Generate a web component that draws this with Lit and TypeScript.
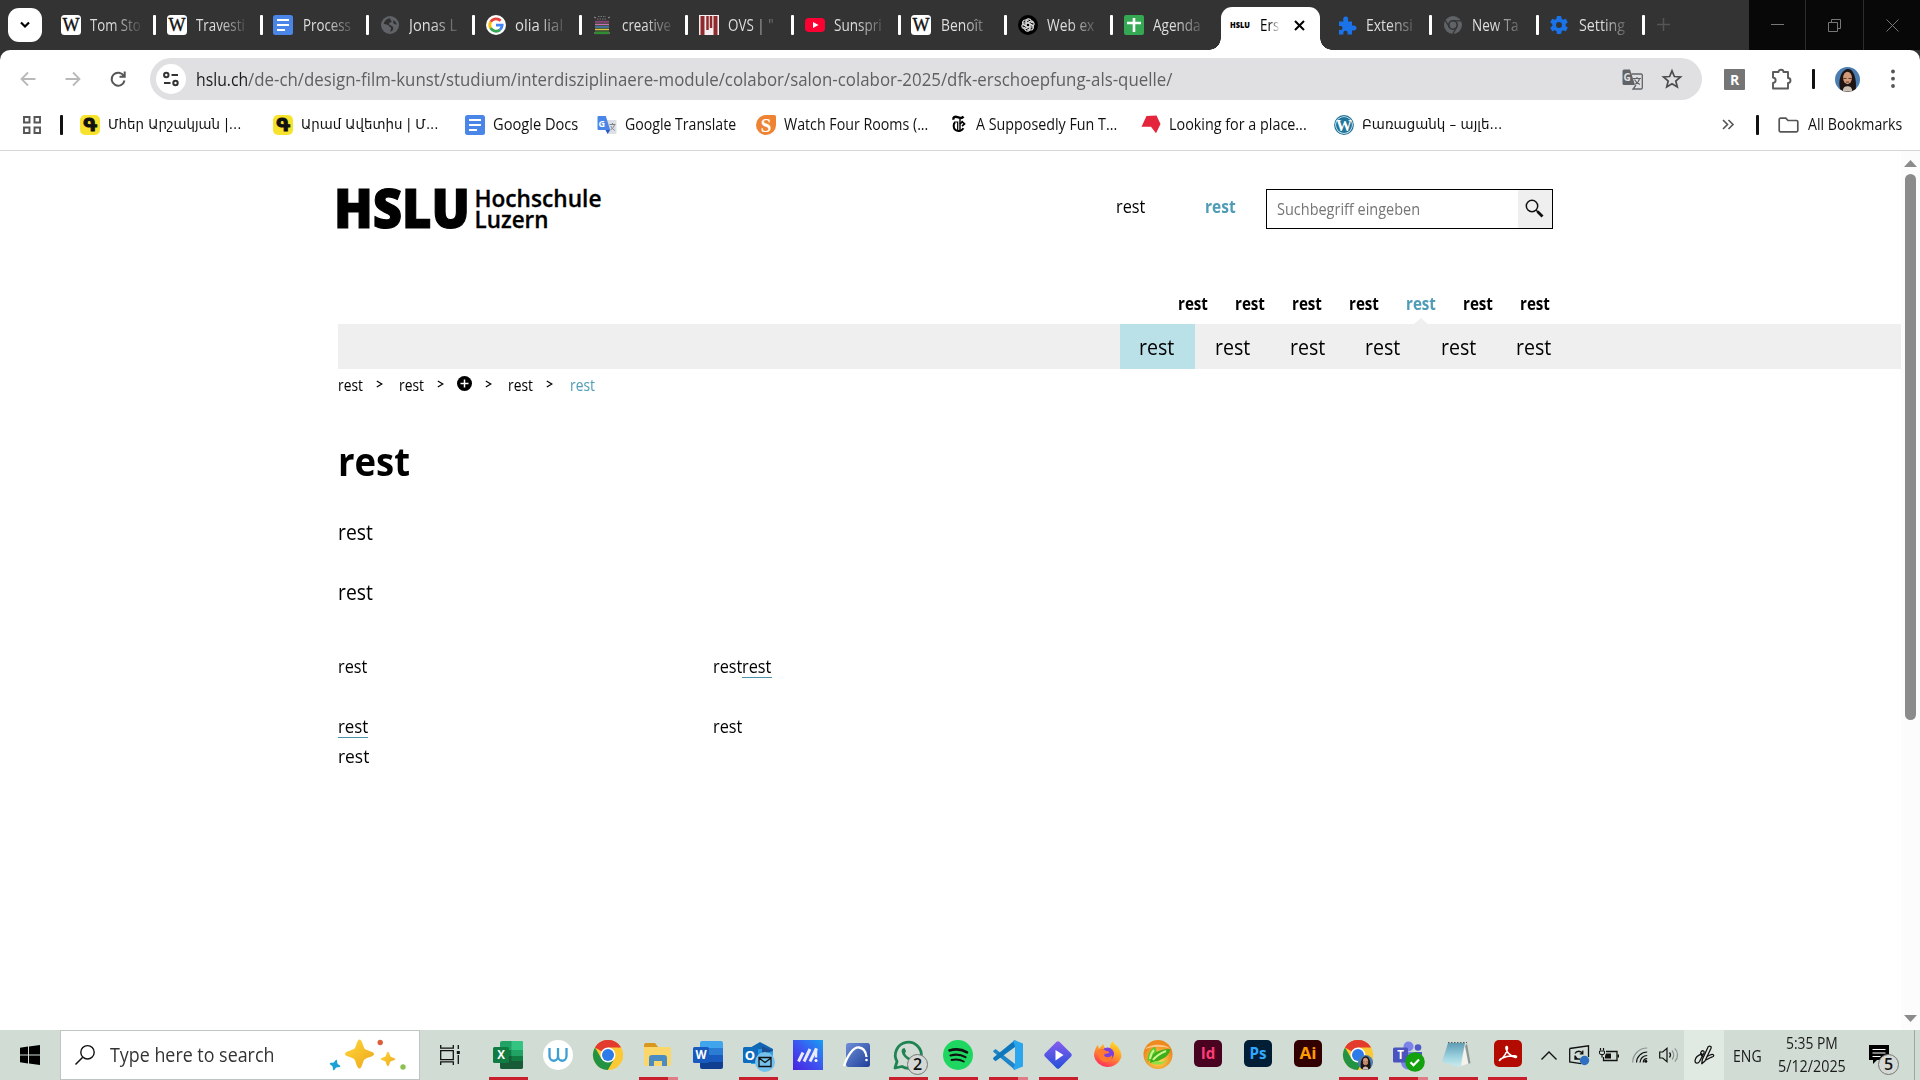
import { LitElement, html, svg, css, nothing } from "lit";
import { customElement, property } from "lit/decorators.js";
import { classMap } from "lit/directives/class-map.js";

/* ---------- text condensed or widened to a given width ---------- */
@customElement("fit-text")
class FitText extends LitElement {
  @property() text = "";
  @property({ type: Number }) w = 0;
  static styles = css`
    :host { display: inline-block; white-space: pre; vertical-align: baseline; }
    .run { display: inline-block; transform-origin: 0 50%; }
  `;
  updated() {
    const run = this.renderRoot.querySelector(".run") as HTMLElement;
    const natural = run.offsetWidth;
    if (this.w && natural) {
      run.style.transform = `scaleX(${this.w / natural})`;
      run.style.marginRight = this.w - natural + "px";
    }
  }
  render() {
    return html`<span class="run">${this.text}</span>`;
  }
}

const fit = (text: string, w: number) => html`<fit-text .text=${text} .w=${w}></fit-text>`;

/* ---------- icons ---------- */
const icon = (w: number, h: number, body: unknown, box = `0 0 ${w} ${h}`) =>
  html`<svg width=${w} height=${h} viewBox=${box} fill="none">${body}</svg>`;

const wiki = svg`<rect width="20" height="20" rx="3.500" fill="#fff"/><text x="10" y="16" text-anchor="middle" font-family="Liberation Serif, serif" font-size="18" textLength="17" lengthAdjust="spacingAndGlyphs" fill="#111" stroke="#111" stroke-width=".4">W</text>`;
const docs = svg`<rect width="20" height="20" rx="2.500" fill="#4a86e8"/><path d="M4 5h12M4 10h12M4 15h8" stroke="#fff" stroke-width="2"/>`;
const globe = svg`<circle cx="10" cy="10" r="9" fill="#5f6368"/><path d="M10 3.200c-3 .4-5.600 2.600-6.300 5.500l4.300 1.200c1.500.4 1 2.100 2.300 2.400 1.500.4.600 2-.3 4.300 2.600-.3 3.400-2.200 3.200-3.700-.3-2.400-2.700-1.900-3.900-3.300-1-1.300.4-2.100 1.800-2.300.9-.2.600-1.700-.3-2z" fill="#2f2f2f"/><path d="M13 5.200c1.800.7 3.300 2.200 3.800 4.200-1.600.4-3-.2-3.600-1.600z" fill="#2f2f2f"/>`;
const google = svg`<circle cx="10" cy="10" r="10" fill="#fff"/><g stroke-width="2.800"><path d="M4.700 6.900A6.200 6.200 0 0 1 14.600 5.800" stroke="#ea4335"/><path d="M4.700 6.800A6.200 6.200 0 0 0 4.700 13.200" stroke="#fbbc05"/><path d="M4.600 13A6.200 6.200 0 0 0 14 14.800" stroke="#34a853"/><path d="M13.900 14.900A6.200 6.200 0 0 0 16.200 10.100H10" stroke="#4285f4"/></g>`;
const creative = svg`<path d="M2 2l2 1M18 2l-2 1M2 18h2M18 18h-2" stroke="#999"/><path d="M6 1.500h8M5 4h10" stroke="#777" stroke-dasharray="1.500 1"/><path d="M3 5.500h14v14H3z" fill="#3f4a3a"/><path d="M3 6.800h14" stroke="#8a3f7a" stroke-width="1.800"/><path d="M3 9.500h14" stroke="#c76fb0" stroke-width="1.300"/><path d="M3 12h14" stroke="#3a88c8" stroke-width="1.300"/><path d="M3 14.500h14" stroke="#e0c23a" stroke-width="1.300"/><path d="M3 17.800h14" stroke="#2f8d32" stroke-width="2.400"/>`;
const ovs = svg`<rect width="20" height="20" fill="#f6eeee"/><path d="M3.500 1v19M16.500 1v19" stroke="#8f2a2f" stroke-width="4"/><path d="M8.500 1v14M12 1v12" stroke="#8f2a2f" stroke-width="2.500"/>`;
const youtube = svg`<rect y="3" width="20" height="14" rx="4" fill="#ff0033"/><path d="M8 7l5.500 3L8 13z" fill="#fff"/>`;
const gpt = svg`<circle cx="10" cy="10" r="10" fill="#000"/><g stroke="#ddd" stroke-width="1.100">${[0, 60, 120, 180, 240, 300].map(
  (a) => svg`<path transform="rotate(${a} 10 10)" d="M8 11.200V6.500c0-3.200 4.600-3.700 5.300-.5M8 8.800l4-2.300 2.800 1.600"/>`
)}</g>`;
const sheet = svg`<rect width="20" height="20" rx="2" fill="#34a853"/><path d="M10 3v14M3 8h14" stroke="#fff" stroke-width="2.600"/>`;
const hslu = svg`<text x="0" y="13" font-family="Open Sans, sans-serif" font-weight="800" font-size="9" textLength="20" lengthAdjust="spacingAndGlyphs" fill="#000">HSLU</text>`;
const puzzleBlue = svg`<path d="M2 6h4.500c-1-3.800.8-5 2.200-5s3.200 1.200 2.200 5H15v4.200c3.200-.8 4.500.8 4.500 2.300S18.200 15.600 15 14.800V19h-4.600c.6-3-.4-3.700-1.900-3.700S6 16 6.600 19H2v-4.700c3 .5 3.500-.7 3.500-1.900S4.800 10 2 10.600z" transform="translate(0 .5)" fill="#1a73e8"/>`;
const chromeGrey = svg`<circle cx="10" cy="10" r="9" fill="#5f6368"/><circle cx="10" cy="10" r="4.200" stroke="#333" stroke-width="1.600"/><path d="M10 5.800h8.300M6.400 12.200L2.300 5.500M13.600 12.200L9.700 19" stroke="#333" stroke-width="1.300"/>`;
const gear = svg`<g fill="#1a73e8"><circle cx="10" cy="10" r="6.800"/>${[0, 60, 120].map(
  (a) => svg`<rect x="7.600" y="1" width="4.800" height="18" rx="1" transform="rotate(${a} 10 10)"/>`
)}</g><circle cx="10" cy="10" r="3" fill="#333"/>`;
const armenian = svg`<rect width="20" height="20" rx="5" fill="#f7e22d"/><text x="10" y="16" text-anchor="middle" font-family="DejaVu Sans, sans-serif" font-weight="700" font-size="18" fill="#111" stroke="#111" stroke-width="1.200">Գ</text>`;
const gTranslate = svg`<path d="M8 5h10.500a1 1 0 0 1 1 1v12a1 1 0 0 1-1 1H11z" fill="#dcdfe3"/><path d="M1.500 1h7.300l4.400 14H1.500a1 1 0 0 1-1-1V2a1 1 0 0 1 1-1z" fill="#4a86e8"/><path d="M8.500 15h4.700l-2.600 4z" fill="#2a56c6"/><text x="1.500" y="11.500" font-family="Open Sans, sans-serif" font-weight="700" font-size="9" fill="#fff">G</text><path d="M12.500 9.500h6M15.500 8v1.500M17.500 9.500c-.6 2.500-2 4.300-4 5.300M13.800 11c.7 1.700 2 3.300 4 4.300" stroke="#7c858e" stroke-width="1"/>`;
const sTape = svg`<path d="M10 0h8.500A1.500 1.500 0 0 1 20 1.500V10A10 10 0 1 1 10 0z" fill="#ee8433"/><text x="10" y="16.500" text-anchor="middle" font-family="Liberation Serif, serif" font-weight="700" font-size="19" fill="#fff">S</text>`;
const times = svg`<g stroke="#000"><path d="M1.500 4.800C.8 2.200 3 1.200 5.500 2.200s4.500 1.500 6-.7" stroke-width="2.400"/><path d="M3 7.200c-1.800 1.600-1.800 5.800.2 7.600s6 1.800 8.300-1.600" stroke-width="2"/><path d="M2.500 7h3.200v8" stroke-width="1.200"/><path d="M8 4v12.500" stroke-width="1.400"/><path d="M8 9l2.200-2.300L12.500 9 10 11.200" stroke-width="1.700"/></g>`;
const redTag = svg`<path d="M5.500 1l10-.4L19.500 9 15 18.300l-5-6.600H.5z" fill="#e3263c"/>`;
const wordpress = svg`<circle cx="10" cy="10" r="9.300" fill="#fff" stroke="#21759b" stroke-width="1.200"/><circle cx="10" cy="10" r="8" fill="#21759b"/><text x="10" y="16" text-anchor="middle" font-family="Liberation Serif, serif" font-weight="700" font-size="17" textLength="16" lengthAdjust="spacingAndGlyphs" fill="#fff">W</text>`;

const chromeBall = svg`<circle cx="15" cy="15" r="15" fill="#fcc934"/><path d="M15 15L2 7.500A15 15 0 0 1 28 7.500z" fill="#e33b2e"/><path d="M2 7.500A15 15 0 0 0 15 30l6.500-11.300L8.500 18.700z" fill="#229342"/><path d="M2 7.500A15 15 0 0 1 28 7.500H15z" fill="#e33b2e"/><path d="M15 30A15 15 0 0 0 28 7.500H15l6.500 11.300z" fill="#fcc934"/><circle cx="15" cy="15" r="7.500" fill="#fff"/><circle cx="15" cy="15" r="6" fill="#2c7be9"/>`;
const face = (x: number, y: number, r: number) => svg`<g transform="translate(${x} ${y}) scale(${r / 12})"><circle r="12" fill="#4a7db0"/><path d="M-7 9C-9 3-7-9 0-10S9 3 8 9A12 12 0 0 1-7.500 9z" fill="#1d1413"/><ellipse cy="-1.500" rx="4.200" ry="6" fill="#d29a78"/><path d="M-4 -1h3M1-1h3M-1.500 2.500h3" stroke="#5a2f22" stroke-width=".9"/><path d="M-4.500 11.500c0-4 2-5 4.500-5s4.500 1 4.500 5z" fill="#cdbfb0"/></g>`;
const adobe = (t: string, bg: string, fg: string) => svg`<rect x="1" y="0" width="28" height="27" rx="5" fill="${bg}"/><text x="15" y="19" text-anchor="middle" font-family="Open Sans, sans-serif" font-weight="700" font-size="16.500" textLength="${t === "Id" ? 14.5 : 17}" lengthAdjust="spacingAndGlyphs" fill="${fg}">${t}</text>`;
const letterTile = (t: string, c: string) => svg`<rect x="0" y="7" width="16" height="16" rx="1.500" fill="${c}"/><text x="8" y="19" text-anchor="middle" font-family="Open Sans, sans-serif" font-weight="700" font-size="11.500" fill="#fff">${t}</text>`;

interface App { art: unknown; run?: "one" | "many"; badge?: string; }
const apps: App[] = [
  { run: "one", art: svg`<rect x="7" y="1" width="23" height="28" rx="2" fill="#21a366"/><path d="M18.500 1H28a2 2 0 0 1 2 2v7H18.500z" fill="#33c481"/><path d="M7 10h11.500v9H7z" fill="#107c41"/><path d="M18.500 10H30v6H18.500z" fill="#21a366"/><path d="M7 16h23v11a2 2 0 0 1-2 2H9a2 2 0 0 1-2-2z" fill="#185c37"/><path d="M18.500 16H30v5H18.500z" fill="#107c41"/>${letterTile("X", "#107c41")}` },
  { art: svg`<circle cx="15" cy="15" r="15" fill="#fff"/><path d="M6.500 8v8c0 6.300 8.500 6.300 8.500 0V8M15 16c0 6.300 8.500 6.300 8.500 0V8" stroke="#3f9fd0" stroke-width="2.300"/>` },
  { art: chromeBall },
  { run: "many", art: svg`<path d="M1 5a2 2 0 0 1 2-2h9l3 4H1z" fill="#d9971f"/><path d="M1 7h25a2 2 0 0 1 2 2v15a2 2 0 0 1-2 2H3a2 2 0 0 1-2-2z" fill="#fbd66b"/><path d="M6 26v-8a3 3 0 0 1 3-3h12a3 3 0 0 1 3 3v8h-5v-5h-8v5z" fill="#4a8cc2"/>` },
  { art: svg`<path d="M9 1h19a2 2 0 0 1 2 2v5H7V3a2 2 0 0 1 2-2z" fill="#41a5ee"/><path d="M7 8h23v7H7z" fill="#2b7cd3"/><path d="M7 15h23v7H7z" fill="#185abd"/><path d="M7 22h23v5a2 2 0 0 1-2 2H9a2 2 0 0 1-2-2z" fill="#103f91"/>${letterTile("W", "#185abd")}` },
  { run: "one", art: svg`<path d="M5 9l12-7 13 7v14H5z" fill="#1066b5"/><path d="M10 9h9v8h-9z" fill="#2a93e0"/><path d="M19 6l11 5v7H19z" fill="#1b4f91"/><path d="M8 18l22-7v13H8z" fill="#2aa4e8"/><rect y="7" width="15" height="16" rx="1.500" fill="#0f6cbd"/><text x="7" y="19.500" text-anchor="middle" font-family="Open Sans, sans-serif" font-weight="700" font-size="13" fill="#fff">O</text><circle cx="22" cy="22" r="10" fill="#74c1ee"/><path d="M16 17.500h12v9H16zM16 18l6 4.500 6-4.500" stroke="#111" stroke-width="1.300"/>` },
  { art: svg`<defs><linearGradient id="mi" x1="0" y1="1" x2="1" y2="0"><stop offset="0" stop-color="#4a22e0"/><stop offset=".5" stop-color="#3d55f0"/><stop offset="1" stop-color="#179ef2"/></linearGradient></defs><rect width="30" height="30" fill="url(#mi)"/><path d="M5.500 21.500L10 12.500M11 21.500L17 9M17 21.500L23.500 8.500" stroke="#e9e9ff" stroke-width="3"/><path d="M23 8.500v9" stroke="#e9e9ff" stroke-width="2.500"/><circle cx="23" cy="20.500" r="1.500" fill="#fff"/>` },
  { art: svg`<defs><linearGradient id="mx" x1="0" y1="0" x2="1" y2="1"><stop offset="0" stop-color="#6f8fd8"/><stop offset="1" stop-color="#1f3f9a"/></linearGradient></defs><rect x="3" y="3" width="24" height="24" rx="2.500" fill="url(#mx)"/><path d="M1 26C5 14 11 7 16 7.500S23 12 23.500 17" stroke="#fff" stroke-width="2.300"/><circle cx="23.500" cy="20" r="1.300" fill="#fff"/>` },
  { run: "one", badge: "2", art: svg`<path d="M2 28l2-6.500A13 13 0 1 1 9 26.500z" stroke="#1f8352" stroke-width="2.800" stroke-linejoin="round"/><path d="M10 8.500c-2 1-2 4.500 1.500 8.500 3.500 4 8 5.500 10 3.500 1.200-1.200 1-2.200.5-2.500l-3-1.500c-.8-.3-1.200 1.500-2.200 1.300-2-.7-4-2.800-4.800-4.600-.2-.8 1.300-1.300 1-2.200l-1.200-2.600c-.3-.6-1.200-.3-1.800.1z" fill="#1f8352"/>` },
  { run: "one", art: svg`<circle cx="15" cy="15" r="15" fill="#1ed760"/><path d="M6.500 10.500c6-1.800 12.500-1.200 17.500 1.800" stroke="#111" stroke-width="2.600" stroke-linecap="round"/><path d="M7.500 15.500c5-1.400 10.500-.9 15 1.600" stroke="#111" stroke-width="2.200" stroke-linecap="round"/><path d="M8.500 20c4.300-1 8.500-.6 12.300 1.500" stroke="#111" stroke-width="1.900" stroke-linecap="round"/>` },
  { run: "many", art: svg`<path d="M0 11l2.500-2L22 24v6L0.500 12z" fill="#1f85c8"/><path d="M0 19l2.500 2.200L22 7V0L0.500 17.500z" fill="#0f78bd"/><path d="M21.500 0L30 3.600v22.800L21.500 30l-1.500-1 2-5V6l-2-5z" fill="#2aa6ef"/>` },
  { run: "one", art: svg`<defs><linearGradient id="dm" x1="0" y1="0" x2="1" y2="1"><stop offset="0" stop-color="#8a5cf0"/><stop offset="1" stop-color="#2150d8"/></linearGradient></defs><rect x="4.700" y="4.700" width="20.600" height="20.600" rx="2" transform="rotate(45 15 15)" fill="url(#dm)"/><path d="M12.500 10l8 5-8 5.500z" fill="#fff"/>` },
  { art: svg`<defs><linearGradient id="ff" x1=".8" y1="0" x2=".3" y2="1"><stop offset="0" stop-color="#ffe226"/><stop offset=".5" stop-color="#ff9329"/><stop offset="1" stop-color="#ff2a5f"/></linearGradient></defs><path d="M1 16C1 11 3 7 5 5l1 4 4-5 2 4h5c0-3 1-5 3-7 1 4 4 4 5 6 3 4 4 8 3 11a14 13.500 0 0 1-27-2z" fill="url(#ff)"/><circle cx="14.500" cy="14" r="6.500" fill="#7a3fe0"/><path d="M5 10c3-2 6-1 8 1 2 0 4 1 3 2-2 1-4 0-5 2 1 3 6 3 8 0 1 4-2 7-6 7-6 0-9-6-8-12z" fill="#ff7a2e"/>` },
  { art: svg`<defs><radialGradient id="lm" cy=".65"><stop offset="0" stop-color="#ffe85a"/><stop offset="1" stop-color="#ee8a20"/></radialGradient></defs><circle cx="15" cy="14.500" r="14.500" fill="url(#lm)"/><path d="M2.500 9C5 5 20 2 27.500 9c-6-3-17-3-25 0z" fill="#ffc98a"/><path d="M4.500 22C4 15 6.500 10 11.500 6.500c2 3 3 6 2 9z" fill="#5fc92a"/><path d="M7 23c0-8 7-14 20.500-14-1 6-6 11-20.500 14z" fill="#3fae1c"/><path d="M8 23c4-2 6-2 10-1 2 0 4-1 6-2.500C21 24.500 15 26 8 23z" fill="#8ee045"/><path d="M7 19c.5-4 2-7 4-9M10 20c3-4 8-7 13-9" stroke="#c9f58a" stroke-width="2"/>` },
  { art: adobe("Id", "#49021f", "#ff3c78") },
  { art: adobe("Ps", "#001e36", "#31a8ff") },
  { art: adobe("Ai", "#330000", "#ff9a00") },
  { run: "one", art: svg`${chromeBall}${face(22.5, 22.5, 7.5)}` },
  { run: "many", art: svg`<circle cx="15.500" cy="6.500" r="5" fill="#7b83eb"/><circle cx="25" cy="7.500" r="3.300" fill="#5059c9"/><path d="M8 12h15v9a7.500 7.500 0 0 1-15 2z" fill="#7b83eb"/><path d="M22 12h7v7a5 5 0 0 1-7 3z" fill="#5059c9"/><rect y="7.500" width="15" height="15" rx="1.500" fill="#4b53bc"/><text x="7.500" y="19" text-anchor="middle" font-family="Open Sans, sans-serif" font-weight="700" font-size="11.500" fill="#fff">T</text><circle cx="22" cy="22" r="9.800" fill="#13a10e"/><path d="M17.500 22.200l3 3 5.500-5.700" stroke="#fff" stroke-width="2.200"/>` },
  { run: "one", art: svg`<defs><linearGradient id="np" x1="0" y1="0" x2="0" y2="1"><stop offset="0" stop-color="#5f9db6"/><stop offset=".6" stop-color="#a0d4e0"/><stop offset="1" stop-color="#c9ecef"/></linearGradient></defs><path d="M22 4l5 19-9 3z" fill="#f3f3ee"/><path d="M24 3.500l3.500 19.500-2 1L22 6z" fill="#8f9795"/><path d="M6 3h17l-5 24-18-5z" transform="translate(-1 0)" fill="url(#np)"/><path d="M5 2.500h19" stroke="#555" stroke-dasharray="1.500 1.500"/>` },
  { run: "one", art: svg`<rect x="2" y="0" width="28" height="27" rx="5" fill="#b30b00"/><path d="M8 20c4-2.500 7-8 7.500-11.500.2-3-2-2.500-1.500 0 .8 4 4.500 7.300 9 8.800 2.200.7 2-1.500 0-1.600-5-.2-10 .8-14 3-1.800 1.300-2 2.500-1 1.300z" stroke="#fff" stroke-width="1.500"/>` },
];

interface Tab { title: string; w: number; art: unknown; active?: boolean; nosep?: boolean; }
const tabs: Tab[] = [
  { title: "Tom Sto", w: 51, art: wiki },
  { title: "Travesti", w: 49, art: wiki },
  { title: "Process", w: 48, art: docs },
  { title: "Jonas L", w: 48, art: globe },
  { title: "olia lial", w: 48, art: google },
  { title: "creative", w: 49, art: creative },
  { title: "OVS | \"", w: 46, art: ovs },
  { title: "Sunspri", w: 48, art: youtube },
  { title: "Benoît", w: 42, art: wiki },
  { title: "Web ex", w: 47, art: gpt },
  { title: "Agenda", w: 48, art: sheet, nosep: true },
  { title: "Ers", w: 19, art: hslu, active: true },
  { title: "Extensi", w: 47, art: puzzleBlue },
  { title: "New Ta", w: 47, art: chromeGrey },
  { title: "Setting", w: 46, art: gear },
];

const bookmarks: [string, number, unknown, boolean?][] = [
  ["Մհեր Արշակյան |...", 134, armenian, true],
  ["Արամ Ավետիս | Մ...", 138, armenian, true],
  ["Google Docs", 85, docs],
  ["Google Translate", 111, gTranslate],
  ["Watch Four Rooms (...", 144, sTape],
  ["A Supposedly Fun T...", 141, times],
  ["Looking for a place...", 138, redTag],
  ["Բառացանկ – այլե...", 140, wordpress, true],
];

/* ---------- tab strip ---------- */
@customElement("tab-strip")
class TabStrip extends LitElement {
  static styles = css`
    :host { display: flex; height: 50px; background: #333; }
    svg { display: block; flex: none; overflow: visible; }
    .menu { width: 34px; height: 34px; margin: 8px 6px 0 8px; border-radius: 11px; background: #fff; display: grid; place-items: center; }
    .tab { position: relative; width: 106.350px; height: 50px; box-sizing: border-box; padding-left: 12px; display: flex; align-items: center; color: #dedede; font-size: 15.500px; line-height: 22px; }
    .tab:first-of-type { margin-left: 1px; }
    .ico { width: 20px; height: 20px; margin-left: .5px; }
    .label { width: 51px; margin: 0 0 0 9.500px; overflow: hidden; white-space: pre; -webkit-mask-image: linear-gradient(90deg, #000 45%, rgba(0,0,0,.1) 100%); mask-image: linear-gradient(90deg, #000 45%, rgba(0,0,0,.1) 100%); }
    .sep::after { content: ""; position: absolute; right: -2px; top: 15px; width: 3px; height: 20px; border-radius: 1px; background: #fff; }
    .active { color: #000; z-index: 1; }
    .active .label { width: 19px; }
    .ico, .label, .close { position: relative; }
    .plate { position: absolute; left: 3px; right: 4px; top: 7px; bottom: 0; background: #fff; border-radius: 11px 11px 0 0; }
    .plate::before, .plate::after { content: ""; position: absolute; bottom: 0; width: 12px; height: 12px; }
    .plate::before { left: -12px; background: radial-gradient(circle at 0 0, transparent 11.500px, #fff 12px); }
    .plate::after { right: -12px; background: radial-gradient(circle at 100% 0, transparent 11.500px, #fff 12px); }
    .close { margin-left: 15px; }
    .plus { margin: 18px 0 0 14px; }
    .win { margin-left: auto; display: grid; grid-template-columns: 56px 57px 56px; gap: 1px; background: #2c2c2c; }
    .win div { background: #080808; display: grid; place-items: center; }
  `;
  render() {
    return html`
      <div class="menu">${icon(12, 8, svg`<path d="M2 1.500l4 4 4-4" stroke="#000" stroke-width="2.200"/>`)}</div>
      ${tabs.map(
        (t) => html`<div class=${classMap({ tab: true, active: !!t.active, sep: !t.active && !t.nosep })}>
          ${t.active ? html`<div class="plate"></div>` : nothing}
          <div class="ico">${icon(20, 20, t.art)}</div>
          <div class="label">${fit(t.title, t.w)}</div>
          ${t.active ? html`<div class="close">${icon(11, 11, svg`<path d="M1 1l9 9M10 1l-9 9" stroke="#000" stroke-width="2"/>`)}</div>` : nothing}
        </div>`
      )}
      <div class="plus">${icon(13, 13, svg`<path d="M6.500 0v13M0 6.500h13" stroke="#555" stroke-width="1.500"/>`)}</div>
      <div class="win">
        <div>${icon(13, 13, svg`<path d="M0 5.500h13" stroke="#777"/>`)}</div>
        <div>${icon(13, 13, svg`<path d="M.5 3.500h9v9h-9zM3.500 3V.5h9v9H10" stroke="#777"/>`)}</div>
        <div>${icon(13, 13, svg`<path d="M.5.5l12 12M12.500.5l-12 12" stroke="#777"/>`)}</div>
      </div>
    `;
  }
}

/* ---------- toolbar and bookmarks ---------- */
@customElement("nav-toolbar")
class NavToolbar extends LitElement {
  static styles = css`
    :host { display: block; height: 101px; box-sizing: border-box; background: linear-gradient(#333 0 14px, #fff 14px); }
    .sheet { height: 101px; box-sizing: border-box; background: #fff; border-radius: 10px 10px 0 0; border-bottom: 1px solid #d6d6d6; }
    svg { display: block; flex: none; overflow: visible; }
    .row { display: flex; align-items: center; height: 42px; padding: 8px 0 0 20px; }
    .row .nav { margin-top: -1px; }
    .fwd, .rel { margin-left: 29px; }
    .omni { display: flex; align-items: center; box-sizing: border-box; width: 1552px; height: 42px; margin-left: 24px; border-radius: 21px; background: #e0e0e2; padding: 0 20px 0 6px; }
    .info { width: 30px; height: 30px; border-radius: 50%; background: #fff; display: grid; place-items: center; margin-right: 10px; }
    .url { font-size: 18.500px; line-height: 30px; color: #5f6062; white-space: pre; }
    .host { color: #1b1b1b; }
    .tr { margin-left: auto; margin-right: 19px; }
    .ext { margin-left: 22px; }
    .puz { margin-left: 26px; }
    .bar { width: 3px; height: 20px; border-radius: 1px; background: #111; }
    .ava { margin-left: 20px; }
    .dots { margin-left: 31px; }
    .marks { display: flex; align-items: center; height: 49px; padding-left: 23px; font-size: 15.500px; color: #111; }
    .list { display: grid; grid-template-columns: 193px 192px 132px 159px 196px 189px 193px 190px; margin-left: 17px; flex: none; }
    .mark { display: flex; align-items: center; gap: 8px; white-space: pre; height: 24px; line-height: 24px; }
    .mark fit-text { margin-top: -1px; }
    .narrow { gap: 4px; }
    .hy { font-family: "DejaVu Sans Condensed", "DejaVu Sans", sans-serif; font-size: 14.500px; }
    .apps { margin-right: 19px; }
    .more { margin-left: auto; margin-right: 22px; }
    .fold { margin: 0 9px 0 19px; }
    .all { margin: -1px 18px 0 0; }
  `;
  render() {
    return html`<div class="sheet">
      <div class="row">
        <div class="nav">${icon(16, 16, svg`<path d="M15.500 8H1.500M8 1.500L1.500 8 8 14.500" stroke="#b9b9b9" stroke-width="1.800"/>`)}</div>
        <div class="nav fwd">${icon(16, 16, svg`<path d="M.5 8h14M8 1.500L14.500 8 8 14.500" stroke="#b9b9b9" stroke-width="1.800"/>`)}</div>
        <div class="nav rel">${icon(16, 16, svg`<path d="M13.800 5A6.500 6.500 0 1 0 14.500 9.500M14.700.5v5.300H9.500" stroke="#555" stroke-width="2"/>`)}</div>
        <div class="omni">
          <div class="info">${icon(16, 16, svg`<g stroke="#333" stroke-width="2"><circle cx="3.300" cy="4" r="2.200"/><path d="M8.500 4h6.500M1 12h6.500"/><circle cx="12.500" cy="12" r="2.200"/></g>`)}</div>
          <div class="url"><span class="host">${fit("hslu.ch", 52)}</span>${fit("/de-ch/design-film-kunst/studium/interdisziplinaere-module/colabor/salon-colabor-2025/dfk-erschoepfung-als-quelle/", 924)}</div>
          <div class="tr">${icon(21, 21, svg`<path d="M2 .5h6l1.500 4.500L13 16H2a1.500 1.500 0 0 1-1.500-1.500V2A1.500 1.500 0 0 1 2 .5z" fill="#5f6368"/><path d="M9.500 5H19a1.300 1.300 0 0 1 1.300 1.300v12.400A1.300 1.300 0 0 1 19 20h-8l3-4" stroke="#5f6368" stroke-width="1.300"/><text x="1.500" y="12" font-family="Open Sans, sans-serif" font-weight="700" font-size="10" fill="#e0e0e2">G</text><path d="M11 9.500h8M15 8v1.500M17.500 9.500c-.5 2.700-2 4.500-4.200 5.600M12.500 10.500c1 2.200 2.700 3.800 5.500 5" stroke="#5f6368" stroke-width="1.200"/>`)}</div>
          ${icon(20, 20, svg`<path d="M10 1.800l2.400 5.700 6.100.5-4.700 4 1.500 6L10 14.800 4.700 18l1.500-6-4.700-4 6.100-.5z" stroke="#4d4d4d" stroke-width="1.700"/>`)}
        </div>
        <div class="ext">${icon(21, 21, svg`<rect width="21" height="21" rx="1" fill="#757575"/><text x="10.500" y="15.500" text-anchor="middle" font-family="Open Sans, sans-serif" font-weight="700" font-size="14" fill="#fff">R</text>`)}</div>
        <div class="puz">${icon(21, 21, svg`<path d="M2 3h5.500c0-3 5-3 5 0H17v6c3.300 0 3.300 5 0 5v5.500H2V14c3.500-.5 3.500-5 0-5.500z" stroke="#5a5a5a" stroke-width="1.900" stroke-linejoin="round"/>`)}</div>
        <div class="ava bar"></div>
        <div class="ava">${icon(25, 25, face(12.5, 12.5, 12.5))}</div>
        <div class="dots">${icon(4, 20, svg`<g fill="#555"><circle cx="2" cy="2.500" r="1.900"/><circle cx="2" cy="9.700" r="1.900"/><circle cx="2" cy="17" r="1.900"/></g>`)}</div>
      </div>
      <div class="marks">
        <div class="apps">${icon(18, 18, svg`<path d="M1 1h5.500v5.500H1zM11.500 1H17v5.500h-5.500zM1 11.500h5.500V17H1zM11.500 11.500H17V17h-5.500z" stroke="#555" stroke-width="1.900"/>`)}</div>
        <div class="bar"></div>
        <div class="list">
          ${bookmarks.map(([t, w, art, hy]) => html`<div class=${classMap({ mark: true, hy: !!hy, narrow: art === times })}>${icon(20, 20, art)}${fit(t, w)}</div>`)}
        </div>
        <div class="more">${icon(12, 11, svg`<path d="M1 1l4.500 4.500L1 10M6.500 1L11 5.500 6.500 10" stroke="#555" stroke-width="1.600"/>`)}</div>
        <div class="bar"></div>
        <div class="fold">${icon(21, 16, svg`<path d="M1.200 13V2.500A1.300 1.300 0 0 1 2.500 1.200h5.300L10 3.500h8.500a1.300 1.300 0 0 1 1.300 1.300V13.500a1.300 1.300 0 0 1-1.300 1.300h-16A1.300 1.300 0 0 1 1.200 13.500z" stroke="#555" stroke-width="1.700"/>`)}</div>
        <div class="all">${fit("All Bookmarks", 94)}</div>
      </div>
    </div>`;
  }
}

/* ---------- web page ---------- */
@customElement("web-page")
class WebPage extends LitElement {
  static styles = css`
    :host { display: grid; grid-template-columns: 1901px 19px; height: 879px; background: #fff; color: #000; }
    svg { display: block; overflow: visible; }
    .doc { padding-left: 338px; }
    .top { display: flex; width: 1215px; padding-top: 38px; height: 40px; }
    .meta { margin: 7px 0 0 auto; display: flex; gap: 60px; font-size: 18.500px; line-height: 20px; }
    .blue { color: #4f9cb6; }
    .bold { font-weight: 700; }
    .find { display: flex; box-sizing: border-box; width: 287px; height: 40px; margin-left: 30px; border: 1px solid #000; }
    .ph { flex: 1; padding-left: 10px; font-size: 16.500px; line-height: 37px; color: #757575; }
    .go { width: 34px; background: #efefef; padding: 9px 0 0 7px; box-sizing: border-box; }
    .main { display: flex; justify-content: flex-end; gap: 27.100px; width: 1211.500px; padding-top: 62px; height: 33px; font-size: 18.500px; line-height: 24px; font-weight: 700; }
    .main .on { position: relative; color: #4f9cb6; }
    .main .on::after { content: ""; position: absolute; left: 8px; top: 27px; border: 7px solid transparent; border-top: 0; border-bottom: 6px solid #efefef; }
    .band { display: flex; justify-content: flex-end; box-sizing: border-box; width: 1563px; height: 45px; background: #efefef; padding-right: 329px; font-size: 21.500px; line-height: 45px; }
    .band div { box-sizing: border-box; width: 75.400px; padding-left: 19.500px; }
    .band .sel { background: #bae0e8; }
    .crumbs { display: flex; align-items: center; height: 32px; font-size: 15.500px; line-height: 32px; }
    .crumbs .gt { margin: 0 16.500px 0 13px; }
    .crumbs .near { margin-right: 12.500px; }
    .crumbs .plus { margin-bottom: 3px; }
    h1 { margin: 33px 0 0; font-size: 40px; line-height: 54px; font-weight: 700; }
    .lead { font-size: 21.500px; line-height: 30px; padding-top: 29px; }
    .lead + .lead { padding-top: 30px; }
    .cols { display: grid; grid-template-columns: 375px 1fr; font-size: 18.500px; line-height: 30px; padding-top: 44px; }
    .cell { padding-bottom: 30px; height: 30px; }
    .link { display: inline-block; line-height: 22px; border-bottom: 1px solid #4a93a8; }
    .scroll { display: flex; flex-direction: column; align-items: center; background: #fcfcfc; padding: 9px 0 8px; }
    .thumb { width: 11px; height: 546px; margin: 7px 0 auto; border-radius: 6px; background: #8b8b8b; }
    .logo { margin-top: -1px; }
  `;
  render() {
    const gt = (near = false) => html`<span class=${classMap({ gt: true, near })}>${icon(7, 8, svg`<path d="M.8 0l5 3-5 3" stroke="#000" stroke-width="1.200"/>`)}</span>`;
    return html`
      <div class="doc">
        <div class="top">
          <div class="logo">${icon(270, 44, svg`<g font-family="Open Sans, sans-serif" fill="#000" stroke="#000"><text x="-4" y="40.300" font-size="54.500" font-weight="800" stroke-width="1.200" textLength="136" lengthAdjust="spacingAndGlyphs">HSLU</text><text x="136.500" y="18.800" font-size="22.500" font-weight="600" stroke-width=".3" textLength="127" lengthAdjust="spacingAndGlyphs">Hochschule</text><text x="136.500" y="40.300" font-size="22.500" font-weight="600" stroke-width=".3" textLength="74" lengthAdjust="spacingAndGlyphs">Luzern</text></g>`)}</div>
          <div class="meta"><span>${fit("rest", 29)}</span><span class="blue bold">${fit("rest", 31)}</span></div>
          <div class="find">
            <div class="ph">${fit("Suchbegriff eingeben", 143)}</div>
            <div class="go">${icon(19, 19, svg`<circle cx="7" cy="7" r="5.700" stroke="#111" stroke-width="1.500"/><path d="M11 11l2 2" stroke="#111" stroke-width="1.500"/><path d="M12.500 12.500l5 5" stroke="#111" stroke-width="2.800"/>`)}</div>
          </div>
        </div>
        <div class="main">${[0, 1, 2, 3, 4, 5, 6].map((i) => html`<span class=${i === 4 ? "on" : ""}>${fit("rest", 30.3)}</span>`)}</div>
        <div class="band">${[0, 1, 2, 3, 4, 5].map((i) => html`<div class=${i === 0 ? "sel" : ""}>${fit("rest", 35.5)}</div>`)}</div>
        <div class="crumbs">
          ${fit("rest", 25)}${gt()}${fit("rest", 25)}${gt(true)}
          <span class="plus">${icon(15, 15, svg`<circle cx="7.500" cy="7.500" r="7.500" fill="#000"/><path d="M7.500 3.500v8M3.500 7.500h8" stroke="#fff" stroke-width="1.500"/>`)}</span>
          ${gt()}${fit("rest", 25)}${gt()}<span class="blue">${fit("rest", 25)}</span>
        </div>
        <h1>${fit("rest", 72)}</h1>
        <div class="lead">${fit("rest", 35)}</div>
        <div class="lead">${fit("rest", 35)}</div>
        <div class="cols">
          <div class="cell">${fit("rest", 29)}</div>
          <div class="cell">${fit("rest", 29)}<span class="link">${fit("rest", 29)}</span></div>
          <div><span class="link">${fit("rest", 30)}</span><br />${fit("rest", 31)}</div>
          <div>${fit("rest", 29)}</div>
        </div>
      </div>
      <div class="scroll">
        ${icon(13, 7, svg`<path d="M6.500 0L13 7H0z" fill="#8b8b8b"/>`)}
        <div class="thumb"></div>
        ${icon(13, 7, svg`<path d="M6.500 7L13 0H0z" fill="#8b8b8b"/>`)}
      </div>
    `;
  }
}

/* ---------- taskbar ---------- */
@customElement("task-bar")
class TaskBar extends LitElement {
  static styles = css`
    :host { display: flex; height: 50px; background: #d1ddd4; color: #1b1b1b; }
    svg { display: block; overflow: visible; flex: none; }
    .start { width: 60px; display: grid; place-items: center; }
    .search { display: flex; align-items: center; box-sizing: border-box; width: 360px; background: #fff; border: 1px solid #bfc6c1; padding-left: 14px; font-size: 19.500px; color: #333; }
    .search .t { margin: 0 61px 0 15px; line-height: 30px; }
    .view { width: 60px; display: grid; place-items: center; }
    .apps { display: flex; padding-left: 3px; }
    .app { position: relative; width: 50px; height: 50px; box-sizing: border-box; padding: 10px; }
    .app:last-child { left: -1px; }
    .app.one::after, .app.many::after { content: ""; position: absolute; left: 6px; bottom: 0; width: 39px; height: 3px; background: #c91f2c; }
    .app.many::after { background: linear-gradient(90deg, #c91f2c 29px, #e07c87 29px); }
    .badge { position: absolute; left: 24px; top: 24px; box-sizing: border-box; width: 21px; height: 21px; border: 1px solid #777; border-radius: 50%; background: #d5d9d6; color: #111; font-size: 16px; line-height: 19px; text-align: center; font-weight: 600; }
    .tray { display: flex; align-items: center; margin-left: auto; }
    .pen { width: 40px; height: 50px; display: grid; place-items: center; background: #e1e9e3; margin-left: 5px; }
    .lang { font-size: 16.500px; margin: 1px 16px 0 9px; line-height: 20px; }
    .clock { width: 68px; display: grid; justify-items: center; font-size: 16px; line-height: 23px; }
    .note { position: relative; width: 20px; height: 20px; margin-left: 23px; }
    .note .badge { left: 9px; top: 9px; }
    .edge { width: 5px; height: 50px; border-left: 1px solid #9fa8a2; margin-left: 25px; }
    .c1 { margin-right: 12px; } .c2 { margin-right: 9px; } .c3 { margin-right: 13px; } .c4 { margin-right: 11px; }
  `;
  render() {
    const spark = (x: number, y: number, r: number, c: string) =>
      svg`<path transform="translate(${x} ${y}) scale(${r})" d="M0-1C.18-1 .25-.5 .36-.36S1-.18 1 0 .5.25.36.36.18 1 0 1-.25.5-.36.36-1 .18-1 0-.5-.25-.36-.36-.18-1 0-1z" fill="${c}"/>`;
    return html`
      <div class="start">${icon(20, 20, svg`<path d="M0 2.800L8 1.600V9.500H0zM9 1.400L20 0v9.500H9zM0 10.500h8v8L0 17.300zM9 10.500h11V20L9 18.600z" fill="#000"/>`)}</div>
      <div class="search">
        ${icon(20, 20, svg`<circle cx="12.500" cy="7.300" r="6.700" stroke="#111" stroke-width="1.400"/><path d="M7.700 12.200L.5 19.500" stroke="#111" stroke-width="1.500"/>`)}
        <div class="t">${fit("Type here to search", 164)}</div>
        ${icon(76, 30, svg`<defs><linearGradient id="au" x1="0" y1="0" x2="1" y2="1"><stop offset="0" stop-color="#ffd83a"/><stop offset="1" stop-color="#eda61c"/></linearGradient></defs>${spark(24.5, 14, 14.5, "url(#au)")}${spark(53, 19, 7.2, "url(#au)")}<g transform="rotate(15 0 25)">${spark(0, 25, 5.5, "#1ba1d6")}</g><circle cx="45.200" cy="2.500" r="2.700" fill="#d9603b"/><circle cx="68" cy="27" r="2.700" fill="#8cc152"/>`)}
      </div>
      <div class="view">${icon(20, 20, svg`<path d="M.7 0v3.200h12.600V0M.7 5.700h12.600v9H.7zM.7 20v-3.200h12.600V20M18.300 0v4M18.300 10v9" stroke="#111" stroke-width="1.300"/><rect x="16.800" y="6" width="3" height="3" fill="#111"/>`)}</div>
      <div class="apps">
        ${apps.map((a) => html`<div class=${classMap({ app: true, one: a.run === "one", many: a.run === "many" })}>${icon(30, 30, a.art)}${a.badge ? html`<div class="badge">${a.badge}</div>` : nothing}</div>`)}
      </div>
      <div class="tray">
        <div class="c1">${icon(16, 9, svg`<path d="M.5 8.500L8 1l7.500 7.500" stroke="#111" stroke-width="1.400"/>`)}</div>
        <div class="c2">${icon(21, 20, svg`<path d="M.7 3.500L19.500.8V12M12 18.700L.7 17V3.500" stroke="#111" stroke-width="1.300"/><path d="M6 8.500c1.500-3 6-3 7.500 0M13.800 5.500v3.300h-3M6 10.500v3.500h3M6.200 11c1 2.500 3 3.500 5 3" stroke="#111" stroke-width="1.300"/><circle cx="15.500" cy="15.500" r="4.700" fill="#2f6fc0"/>`)}</div>
        <div class="c3">${icon(20, 14, svg`<path d="M7 3.500h11v9H4.500V9" stroke="#111" stroke-width="1.300"/><path d="M7 5.500h5v5H6V8z" fill="#111"/><path d="M18.500 6.500h1.500v3h-1.500z" fill="#111"/><path d="M1.500 0v2.500M4.500 0v2.500M3 7v2.500" stroke="#111" stroke-width="1.200"/><path d="M.5 3h5v2A1.500 1.500 0 0 1 4 6.500H2A1.500 1.500 0 0 1 .5 5z" stroke="#111" stroke-width="1"/>`)}</div>
        <div class="c4">${icon(16, 16, svg`<path d="M.7 15.500A14.500 14.500 0 0 1 15.200 1" stroke="#8c948f" stroke-width="1.200"/><path d="M4.500 15.500A10.700 10.700 0 0 1 15.200 5M8 15.500A7.200 7.200 0 0 1 15.200 8.500M11.200 15.500a4 4 0 0 1 4-3.800" stroke="#111" stroke-width="1.200"/><circle cx="13.800" cy="14.300" r="1.500" fill="#111"/>`)}</div>
        ${icon(20, 16, svg`<path d="M.7 5h3L8 1.300v13.400L3.700 11h-3z" stroke="#111" stroke-width="1.200"/><path d="M10.500 5.500c1.300 1.500 1.300 3.500 0 5" stroke="#111" stroke-width="1.200"/><path d="M13 3.500c2.300 2.500 2.300 6.500 0 9M15.800 1.300c3.600 3.600 3.600 9.800 0 13.400" stroke="#8c948f" stroke-width="1.200"/>`)}
        <div class="pen">${icon(21, 20, svg`<g stroke="#111" stroke-width="1.300" stroke-linejoin="round"><path d="M8.300 14.500L14.300 1.500c2.500-.8 3.300.3 2.700 1.800L11 16l-3.200 2.700z"/><path d="M8.500 9C4 9.500 1 13 1 16c0 2.500 3 3 4.500.5L10 8c.8-2.500-2-3-3-1-1 1.800 0 3 2 5"/><path d="M13 11.500l3-1.500c1.500-1 3.500-1 3.700.5.300 1.500-1.500 1.500-3 2L12 15"/></g>`)}</div>
        <div class="lang">${fit("ENG", 29)}</div>
        <div class="clock"><span>${fit("5:35 PM", 52)}</span><span>${fit("5/12/2025", 68)}</span></div>
        <div class="note">${icon(20, 20, svg`<path d="M0 0h20v15H8l-4 4v-4H0z" fill="#000"/><path d="M3.500 4.500h13M3.500 8h13M3.500 11.500h8" stroke="#fff" stroke-width="1.200"/>`)}<div class="badge">5</div></div>
        <div class="edge"></div>
      </div>
    `;
  }
}

@customElement("app-root")
class AppRoot extends LitElement {
  static styles = css`
    :host { display: grid; grid-template-rows: 50px 101px 879px 50px; width: 1920px; height: 1080px; overflow: hidden; background: #fff; font-family: "Open Sans", "Noto Sans", "DejaVu Sans", sans-serif; }
  `;
  render() {
    return html`<tab-strip></tab-strip><nav-toolbar></nav-toolbar><web-page></web-page><task-bar></task-bar>`;
  }
}
